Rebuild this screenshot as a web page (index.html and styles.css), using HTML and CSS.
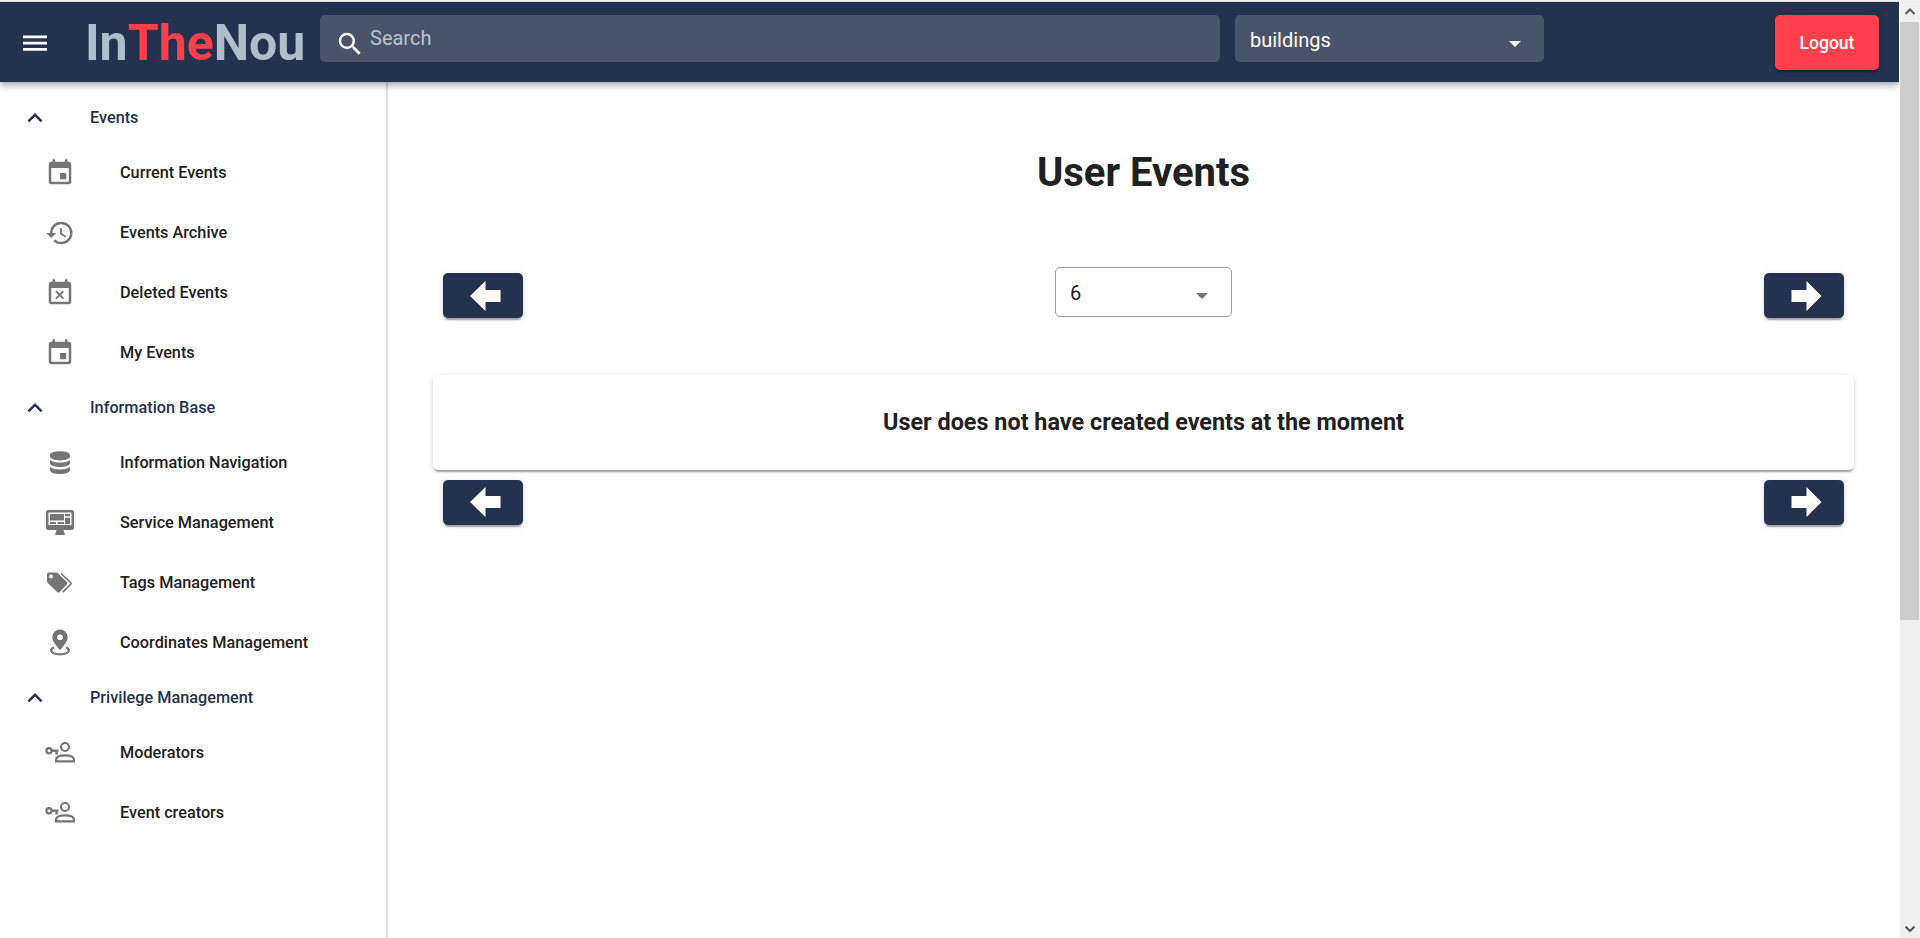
FILE: index.html
```html
<!DOCTYPE html>
<html lang="en">
<head>
<meta charset="utf-8">
<title>InTheNou</title>
<link rel="stylesheet" href="styles.css">
</head>
<body>
<svg class="defs" aria-hidden="true">
  <symbol id="up" viewBox="0 0 24 24"><path d="M7.41 15.41L12 10.83l4.59 4.58L18 14l-6-6-6 6z"/></symbol>
  <symbol id="event" viewBox="0 0 24 24"><path d="M17 12h-5v5h5v-5zM16 1v2H8V1H6v2H5c-1.11 0-1.99.9-1.99 2L3 19c0 1.1.89 2 2 2h14c1.1 0 2-.9 2-2V5c0-1.1-.9-2-2-2h-1V1h-2zm3 18H5V8h14v11z"/></symbol>
  <symbol id="history" viewBox="0 0 24 24"><path d="M13 3a9 9 0 0 0-9 9H1l3.89 3.89.07.14L9 12H6c0-3.87 3.13-7 7-7s7 3.13 7 7-3.13 7-7 7c-1.93 0-3.68-.79-4.94-2.06l-1.42 1.42A8.954 8.954 0 0 0 13 21a9 9 0 0 0 0-18zm-1 5v5l4.28 2.54.72-1.21-3.5-2.08V8H12z"/></symbol>
  <symbol id="busy" viewBox="0 0 24 24"><path d="M9.31 17l2.44-2.44L14.19 17l1.06-1.06-2.44-2.44 2.44-2.44L14.19 10l-2.44 2.44L9.31 10l-1.06 1.06 2.44 2.44-2.44 2.44L9.31 17zM19 3h-1V1h-2v2H8V1H6v2H5c-1.11 0-1.99.9-1.99 2L3 19c0 1.1.89 2 2 2h14c1.1 0 2-.9 2-2V5c0-1.1-.9-2-2-2zm0 16H5V8h14v11z"/></symbol>
  <symbol id="database" viewBox="0 0 30 30"><path d="M5 7C5 4.800 9.500 3.300 15 3.300S25 4.800 25 7v1.500c0 2.200-4.500 3.900-10 3.900S5 10.700 5 8.500zM5 12c2.200 1.800 6 2.600 10 2.600s7.800-.8 10-2.600v3.300c0 2.100-4.500 3.700-10 3.700S5 17.400 5 15.300zM5 19c2.200 1.700 6 2.500 10 2.500s7.800-.8 10-2.500v3.200c0 2.200-4.500 3.900-10 3.900S5 24.400 5 22.200z"/></symbol>
  <symbol id="monitor" viewBox="0 0 30 30"><path fill-rule="evenodd" d="M3 2h24a2 2 0 0 1 2 2v16a2 2 0 0 1-2 2h-8.500l1.500 5h-10l1.500-5H3a2 2 0 0 1-2-2V4a2 2 0 0 1 2-2zM3.500 4.500v12.500h23V4.500z"/><path d="M5 6h14v6.500H5zM20 6h5v2.300h-5zM20 9.700h5v6.300h-5zM5 14h6v2H5zM12.500 14h6.500v2h-6.500z"/></symbol>
  <symbol id="tags" viewBox="0 0 30 30"><path fill-rule="evenodd" d="M3.500 4.500H11a2.500 2.500 0 0 1 1.800.8l9 8.800a1.800 1.800 0 0 1 0 2.500l-7.200 7.300a1.800 1.800 0 0 1-2.500 0L2.800 15a2.500 2.500 0 0 1-.8-1.800V6a1.500 1.500 0 0 1 1.500-1.500zM6 6.500a2 2 0 1 0 0 4 2 2 0 0 0 0-4z"/><path fill="none" stroke="currentColor" stroke-width="1.600" d="M16 5.500l9.800 9.200a1 1 0 0 1 0 1.400l-8 8"/></symbol>
  <symbol id="pin" viewBox="0 0 30 30"><path fill-rule="evenodd" d="M15 1.500a7.700 7.700 0 0 0-7.700 7.700C7.300 14 12 18 15 22.300c3-4.300 7.700-8.300 7.700-13.100A7.700 7.700 0 0 0 15 1.500zm0 5a2.800 2.800 0 1 1 0 5.600 2.800 2.800 0 0 1 0-5.600z"/><path d="M8.500 18.600C6.300 19.300 5 20.700 5 22.300c0 3 4.500 5.200 10 5.200s10-2.200 10-5.200c0-1.600-1.300-3-3.500-3.700l-1.100 1.600c1.500.5 2.300 1.200 2.300 2 0 1.700-3.200 3-7.700 3s-7.700-1.300-7.700-3c0-.8.8-1.500 2.300-2z"/></symbol>
  <symbol id="keyuser" viewBox="0 0 30 30"><g fill="none" stroke="currentColor" stroke-width="2.200"><circle cx="20" cy="9" r="4"/><circle cx="4" cy="12.700" r="2.600"/><path stroke-width="2.500" d="M6.500 12.700H13.500M11.600 12.700v3.800"/><path d="M11.100 23.400h17.800v-1.700c0-3.200-4.900-4.400-8.900-4.400s-8.900 1.200-8.900 4.400z"/></g></symbol>
  <symbol id="larr" viewBox="0 0 31 30"><path d="M0 15L15.500 0V9H30.500v12H15.500v9z"/></symbol>
  <symbol id="rarr" viewBox="0 0 31 30"><path d="M30.500 15L15.500 0V9H.5v12h15v9z"/></symbol>
</svg>
<div class="window">
  <div class="page">
    <header class="toolbar">
      <svg class="menu" viewBox="0 0 24 24"><path d="M2.400 6h19.200v2.100H2.400zm0 5h19.200v2.100H2.400zm0 5h19.200v2.100H2.400z"/></svg>
      <h1 class="logo">In<span class="accent">The</span>Nou</h1>
      <div class="search">
        <svg class="lens" viewBox="0 0 24 24"><path d="M9.500 3A6.500 6.500 0 0 1 16 9.500c0 1.610-.59 3.090-1.560 4.230l.27.270h.79l5 5-1.500 1.500-5-5v-.79l-.27-.27A6.516 6.516 0 0 1 9.500 16a6.500 6.500 0 0 1 0-13m0 2C7 5 5 7 5 9.500S7 14 9.500 14 14 12 14 9.500 12 5 9.500 5z"/></svg>
        <span class="placeholder">Search</span>
      </div>
      <div class="picker"><span>buildings</span><i class="caret"></i></div>
      <button class="logout">Logout</button>
    </header>
    <div class="body">
      <nav class="drawer">
        <div class="group"><svg><use href="#up"/></svg>Events</div>
        <a class="item"><svg><use href="#event"/></svg>Current Events</a>
        <a class="item"><svg><use href="#history"/></svg>Events Archive</a>
        <a class="item"><svg><use href="#busy"/></svg>Deleted Events</a>
        <a class="item"><svg><use href="#event"/></svg>My Events</a>
        <div class="group"><svg><use href="#up"/></svg>Information Base</div>
        <a class="item"><svg><use href="#database"/></svg>Information Navigation</a>
        <a class="item"><svg><use href="#monitor"/></svg>Service Management</a>
        <a class="item"><svg><use href="#tags"/></svg>Tags Management</a>
        <a class="item"><svg><use href="#pin"/></svg>Coordinates Management</a>
        <div class="group"><svg><use href="#up"/></svg>Privilege Management</div>
        <a class="item"><svg><use href="#keyuser"/></svg>Moderators</a>
        <a class="item"><svg><use href="#keyuser"/></svg>Event creators</a>
      </nav>
      <main class="content">
        <h2 class="title">User Events</h2>
        <div class="pager top">
          <button class="arrow"><svg><use href="#larr"/></svg></button>
          <div class="select"><span>6</span><i class="caret"></i></div>
          <button class="arrow"><svg><use href="#rarr"/></svg></button>
        </div>
        <section class="card">User does not have created events at the moment</section>
        <div class="pager bottom">
          <button class="arrow"><svg><use href="#larr"/></svg></button>
          <button class="arrow"><svg><use href="#rarr"/></svg></button>
        </div>
      </main>
    </div>
  </div>
  <div class="scrollbar">
    <svg viewBox="0 0 20 21"><path d="M5.500 13L10 8.500l4.500 4.500"/></svg>
    <div class="thumb"></div>
    <svg class="down" viewBox="0 0 20 21"><path d="M5.500 9.500L10 14l4.500-4.500"/></svg>
  </div>
</div>
</body>
</html>
```
FILE: styles.css
```css
* { box-sizing: border-box; }
body { margin: 0; font-family: Roboto, sans-serif; color: #212121; background: #fff; overflow: hidden; }
svg { fill: currentColor; flex: none; }
button { border: 0; padding: 0; font-family: inherit; }
.defs { display: none; }
.window { display: flex; height: 938px; border-top: 1px solid #f4f4f4; }
.page { flex: 1; display: flex; flex-direction: column; border-top: 1px solid #dcdfe2; border-right: 1px solid #fff; overflow: hidden; }

.toolbar { height: 80px; flex: none; display: flex; align-items: flex-start; padding: 13px 20px 0; background: #25324f; color: #fff; position: relative; z-index: 1;
  box-shadow: 0 2px 5px -1px rgba(0,0,0,.2), 0 5px 6px rgba(0,0,0,.14), 0 1px 12px rgba(0,0,0,.12); }
.menu { width: 30px; height: 30px; margin-top: 13px; }
.logo { width: 235px; margin: 1px 0 0 35px; font-size: 50px; line-height: 54px; font-weight: 700; color: #b0bec9; white-space: nowrap; }
.accent { color: #ff3f4c; }
.search, .picker { height: 47px; border-radius: 5px; background: #49546b; display: flex; font-size: 20px; }
.search { width: 900px; padding-left: 15px; }
.lens { width: 30px; height: 30px; margin-top: 14px; }
.placeholder { margin-left: 5px; line-height: 47px; color: #bec3cc; }
.picker { width: 309px; margin-left: 15px; padding: 2px 23px 0 15px; align-items: center; justify-content: space-between; }
.caret { width: 0; height: 0; border: 6.250px solid transparent; border-top-color: currentColor; border-bottom: 0; }
.picker .caret { margin-top: 8px; }
.logout { width: 104px; height: 55px; margin-left: auto; border-radius: 5px; background: #ff3f4c; color: #fff; font-size: 17.500px; font-weight: 500;
  box-shadow: 0 4px 1px -2px rgba(0,0,0,.2), 0 2px 2px rgba(0,0,0,.14), 0 1px 6px rgba(0,0,0,.12); }

.body { flex: 1; display: flex; }
.drawer { width: 388px; padding-top: 10px; border-right: 2px solid #dedede; }
.group, .item { display: flex; align-items: center; font-size: 16.250px; font-weight: 500; }
.group svg, .item svg { width: 30px; height: 30px; margin-top: 2px; }
.group { height: 50px; padding-left: 20px; gap: 40px; color: #25324f; }
.item { height: 60px; padding-left: 45px; gap: 45px; }
.item svg { color: #757575; }

.content { flex: 1; padding: 65px 45px 0; }
.title { margin: 0; text-align: center; font-size: 40px; line-height: 52px; font-weight: 700; }
.pager { display: flex; justify-content: space-between; padding: 0 10px; }
.top { margin-top: 68px; height: 108px; }
.top .arrow { margin-top: 6px; }
.bottom { margin-top: 10px; }
.arrow { width: 80px; height: 45px; padding: 1px 0 0 5px; display: flex; align-items: center; justify-content: center; border-radius: 5px; background: #25324f; color: #fff;
  box-shadow: 0 4px 1px -2px rgba(0,0,0,.2), 0 2px 2px rgba(0,0,0,.14), 0 1px 6px rgba(0,0,0,.12); }
.bottom .arrow { padding: 0 0 1px 5px; }
.arrow svg { width: 31px; height: 30px; }
.select { width: 177px; height: 50px; border: 1px solid #9e9e9e; border-radius: 5px; padding: 2px 23px 0 14px; display: flex; align-items: center; justify-content: space-between; font-size: 20px; }
.select .caret { color: #757575; margin-top: 5px; }
.card { height: 95px; padding-bottom: 2px; display: flex; align-items: center; justify-content: center; border-radius: 5px; font-size: 23.400px; font-weight: 700;
  box-shadow: 0 4px 1px -2px rgba(0,0,0,.2), 0 2px 2px rgba(0,0,0,.14), 0 1px 6px rgba(0,0,0,.12); }

.scrollbar { width: 20px; background: #f0f0f0; display: flex; flex-direction: column; }
.scrollbar svg { width: 20px; height: 21px; fill: none; stroke: #555; stroke-width: 2; }
.thumb { width: 19px; height: 598px; background: #cdcdcd; }
.down { margin-top: auto; }
```
